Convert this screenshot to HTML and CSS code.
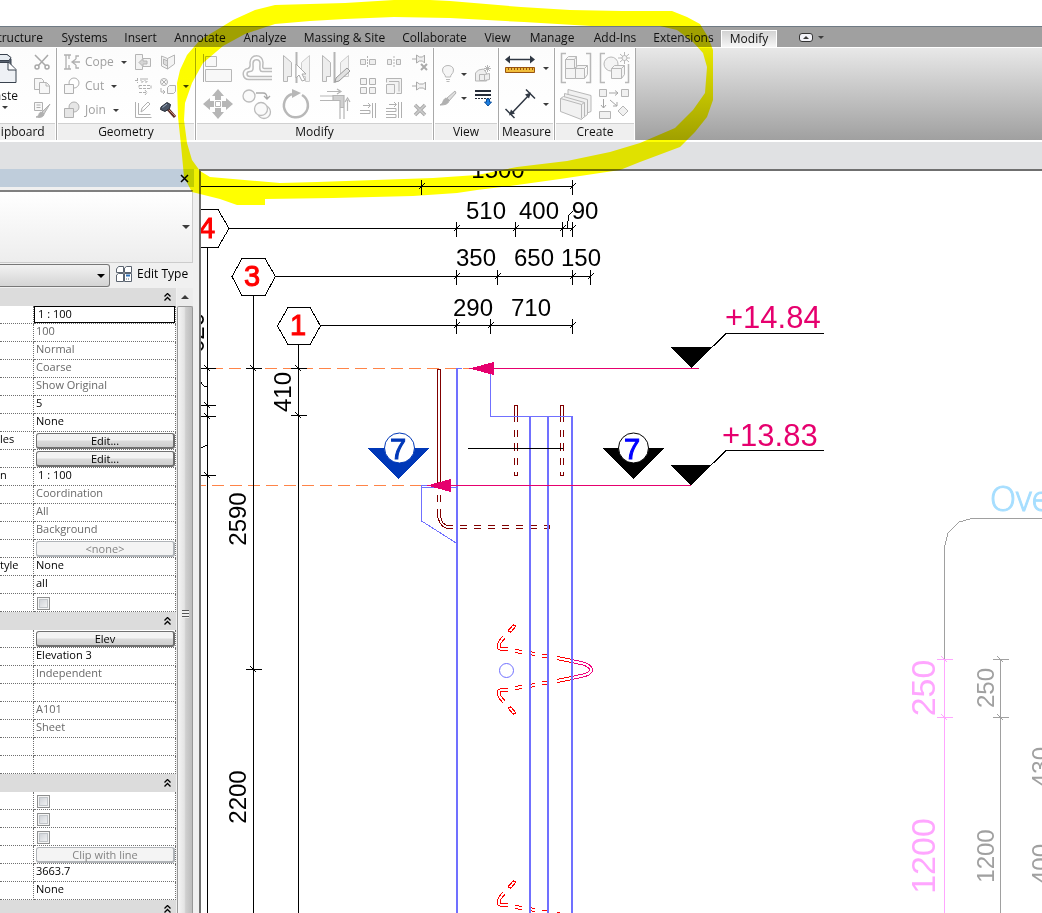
FILE: index.html
```html
<!DOCTYPE html>
<html lang="en">
<head>
<meta charset="utf-8">
<title>Section view</title>
<link rel="stylesheet" href="styles.css">
</head>
<body>
<div class="app">
  <nav class="tabs" aria-label="Ribbon tabs">
    <a class="tab tab-cut" href="#structure">Structure</a>
    <a class="tab" href="#systems">Systems</a>
    <a class="tab" href="#insert">Insert</a>
    <a class="tab" href="#annotate">Annotate</a>
    <a class="tab" href="#analyze">Analyze</a>
    <a class="tab" href="#massing">Massing &amp; Site</a>
    <a class="tab" href="#collaborate">Collaborate</a>
    <a class="tab" href="#view">View</a>
    <a class="tab" href="#manage">Manage</a>
    <a class="tab" href="#addins">Add-Ins</a>
    <a class="tab" href="#extensions">Extensions</a>
    <a class="tab tab-active" href="#modify">Modify</a>
    <button class="minimize" type="button" aria-label="Minimize ribbon"><span class="pill"><span class="caret caret-up"></span></span><span class="caret"></span></button>
  </nav>

  <div class="ribbon">
    <section class="panel panel-clipboard">
      <div class="tools tools-clipboard">
        <button class="tool paste" type="button">
          <svg width="32" height="32" viewBox="0 0 32 32"><path d="M2 3h20l3 4v6h-23z" fill="#56606e" stroke="#39424e"/><path d="M6 2.500h15l4 3-2 3H6z" fill="#e8edf2" stroke="#39424e"/><path d="M4 10.500h19l7 7v13H4z" fill="#eef1f5" stroke="#39424e"/><path d="M22 11v7h8" fill="#fff" stroke="#39424e"/></svg>
          <span>Paste</span><span class="caret"></span>
        </button>
        <div class="stack">
          <button class="tool" type="button" aria-label="Cut to clipboard"><svg width="18" height="18" viewBox="0 0 18 18" fill="none" stroke="#a9a9a9" stroke-width="1.500"><path d="M2 2l11 11M15 2L5 13"/><circle cx="4" cy="14" r="2"/><circle cx="14" cy="14" r="2"/></svg></button>
          <button class="tool" type="button" aria-label="Copy to clipboard"><svg width="18" height="18" viewBox="0 0 18 18" fill="#f7f7f7" stroke="#b5b5b5"><path d="M1.500 1.500h7l2 2v9h-9z"/><path d="M6.500 5.500h7l3 3v8h-10z"/><path d="M13 6v3h3" fill="none"/></svg></button>
          <button class="tool" type="button" aria-label="Match type"><svg width="18" height="18" viewBox="0 0 18 18" fill="#f7f7f7" stroke="#b0b0b0"><path d="M1.500 1.500h8v8h-8zM3.500 4h4M3.500 6.500h4"/><path d="M17 3l-8 8 2 2z" fill="#ccc"/><path d="M8 11c-3 1-1 4-5 5 4 1 8 0 8-3z" fill="#b0b0b0"/></svg></button>
        </div>
      </div>
      <h2 class="panel-title">Clipboard</h2>
    </section>

    <section class="panel panel-geometry">
      <div class="tools tools-geometry">
        <button class="tool labelled" type="button"><svg width="18" height="18" viewBox="0 0 18 18" fill="none" stroke="#b0b0b0" stroke-width="1.300"><path d="M1 2h7M1 16h7M3 2v14M6 2v4M6 12v4M10 9h7M13 6l-4 3 4 3M16 3h-3v3M16 15h-3v-3"/></svg>Cope<span class="caret"></span></button>
        <button class="tool" type="button" aria-label="Wall joins"><svg width="18" height="18" viewBox="0 0 18 18" fill="#f3f3f3" stroke="#b5b5b5"><path d="M1.500 1.500h7v4h8v8h-8v3h-7z"/><path d="M5 9.500l4-4v2.500h4v3H9V13.500z" fill="#d5d5d5"/></svg></button>
        <button class="tool" type="button" aria-label="Split face"><svg width="18" height="18" viewBox="0 0 18 18" fill="#f3f3f3" stroke="#b5b5b5"><path d="M2.500 3l6 2.500 7-3.500v9l-7 5-6-3z"/><path d="M8.500 5.500v10.500M4.500 6l4 2v5l-4-2z" fill="#ddd"/></svg></button>
        <span></span>
        <button class="tool labelled" type="button"><svg width="18" height="18" viewBox="0 0 18 18" fill="#fff" stroke="#b0b0b0"><circle cx="11" cy="6" r="5"/><path d="M1.500 7.500h9v9h-9z" fill="#f7f7f7"/></svg>Cut<span class="caret"></span></button>
        <button class="tool" type="button" aria-label="Beam joins"><svg width="18" height="18" viewBox="0 0 18 18" fill="none" stroke="#b0b0b0"><path d="M1 3.500h4M3.500 1v5M7 1v4h2v-4M11 1v4h2v-4M5 8.500h12v3H5zM5 15.500h8M11 13l2 2.500-2 2.500" stroke-dasharray="3 1"/></svg></button>
        <button class="tool" type="button" aria-label="Paint"><svg width="18" height="18" viewBox="0 0 18 18" fill="#f7f7f7" stroke="#b0b0b0"><circle cx="5" cy="5" r="3.500"/><path d="M3 3l4 4M7 3L3 7M2 11v4h4M4 13l2 2-2 2" fill="none"/><path d="M8.500 10.500l2-2h6v6l-2 2h-6z"/></svg></button>
        <span class="caret"></span>
        <button class="tool labelled" type="button"><svg width="18" height="18" viewBox="0 0 18 18" fill="#e6e6e6" stroke="#b0b0b0"><circle cx="11" cy="6" r="5"/><path d="M1.500 7.500h9v9h-9z"/></svg>Join<span class="caret"></span></button>
        <button class="tool" type="button" aria-label="Unjoin"><svg width="18" height="18" viewBox="0 0 18 18" fill="none" stroke="#b0b0b0"><path d="M1.500 1v15.500h16M4.500 2v11.500h12M7 11l1-4 6-6 2 2-6 6z"/></svg></button>
        <button class="tool" type="button" aria-label="Demolish"><svg width="18" height="18" viewBox="0 0 18 18"><path d="M8 7l8 9" stroke="#5a2c24" stroke-width="3"/><path d="M9 8l7 7" stroke="#c98a78"/><path d="M2 6l6-4.500 3.500 2-1 4L6 10.500 1.500 8.500z" fill="#4a5565" stroke="#252c36"/><path d="M3.500 6.500L8 3" stroke="#9aabc0"/></svg></button>
        <span></span>
      </div>
      <h2 class="panel-title">Geometry</h2>
    </section>

    <section class="panel panel-modify">
      <div class="tools tools-modify">
        <div class="large-grid">
          <button class="tool" type="button" aria-label="Align"><svg width="32" height="32" viewBox="0 0 32 32" fill="#f8f8f8" stroke="#b8b8b8"><path d="M1.500 2v28" stroke="#aaa"/><path d="M3.500 4.500h11v10h-11zM3.500 17.500h26v12h-26z"/></svg></button>
          <button class="tool" type="button" aria-label="Offset"><svg width="32" height="32" viewBox="0 0 32 32" fill="none" stroke="#bdbdbd" stroke-width="1.500"><path d="M31 16.500h-8c-2 0-1-3-1-6 0-9-13-9-13 0 0 3 1 5-2 6-7 1-6 11 1 11h23"/><path d="M31 19.500h-10c-3 0-2-5-2-8 0-5-7-5-7 0 0 4 1 8-3 8-4 0-4 5 0 5h22"/></svg></button>
          <button class="tool" type="button" aria-label="Mirror - pick axis"><svg width="32" height="32" viewBox="0 0 32 32" fill="#ededed" stroke="#b5b5b5"><path d="M3.500 3.500l8 7v14h-4v5h-4z"/><path d="M29.500 3.500l-8 7v14h4v5h4z" fill="#f3f3f3" stroke="#ccc"/><path d="M16.500 0v31" stroke-width="2"/><path d="M16 12l10 10h-4l3 6-3 1-3-6-3 3z" fill="#fff" stroke="#aaa"/></svg></button>
          <button class="tool" type="button" aria-label="Mirror - draw axis"><svg width="32" height="32" viewBox="0 0 32 32" fill="#ededed" stroke="#b5b5b5"><path d="M3.500 3.500l8 7v14h-4v5h-4z"/><path d="M29.500 3.500l-8 7v14h8z" fill="#f3f3f3" stroke="#ccc"/><path d="M15.500 0v31" stroke-width="2"/><path d="M28 16l3 3-11 10-4 1 1-4z" fill="#e2e2e2" stroke="#999"/></svg></button>
          <button class="tool" type="button" aria-label="Move"><svg width="32" height="32" viewBox="0 0 32 32" fill="#b6b6b6"><path d="M16 1l6 7h-3v4h-6V8h-3zM16 31l6-7h-3v-4h-6v4h-3zM1 16l7-6v3h4v6H8v3zM31 16l-7-6v3h-4v6h4v3z"/><path d="M13.500 13.500h5v5h-5z" fill="#fff" stroke="#b6b6b6"/></svg></button>
          <button class="tool" type="button" aria-label="Copy"><svg width="32" height="32" viewBox="0 0 32 32" fill="#fafafa" stroke="#bcbcbc" stroke-width="1.300"><circle cx="8" cy="8" r="6"/><circle cx="23" cy="24" r="6.500"/><circle cx="20" cy="21" r="6.500"/><path d="M15 5h7q4 0 4 5M23 8l3 3 3-3" fill="none" stroke="#a9a9a9"/></svg></button>
          <button class="tool" type="button" aria-label="Rotate"><svg width="32" height="32" viewBox="0 0 32 32" fill="none" stroke="#b8b8b8" stroke-width="2.500"><path d="M12 6a12 12 0 1 0 10 1"/><path d="M12 1l9 4-9 5z" fill="#b8b8b8" stroke="none"/></svg></button>
          <button class="tool" type="button" aria-label="Trim to corner"><svg width="32" height="32" viewBox="0 0 32 32" fill="none" stroke="#b5b5b5" stroke-width="1.200"><path d="M8 3.500h13M18 1l4 2.500-4 2.500M28.500 23v-11M26 14l2.500-4 2.500 4"/><path d="M1 8h13M1 12.500h13M21 20v11M25 20v11"/><path d="M14 7.500h11v12h-4v-7h-7z" fill="#d0d0d0"/></svg></button>
        </div>
        <div class="small-grid">
          <button class="tool" type="button" aria-label="Split element"><svg width="18" height="18" viewBox="0 0 18 18" fill="#eee" stroke="#b5b5b5"><path d="M1.500 6.500h5v5h-5zM10.500 6.500h6v5h-6z"/><path d="M8.500 3v12" stroke-dasharray="2 1"/></svg></button>
          <button class="tool" type="button" aria-label="Split with gap"><svg width="18" height="18" viewBox="0 0 18 18" fill="#eee" stroke="#b5b5b5"><path d="M2.500 6.500h4v5h-4zM11.500 6.500h4v5h-4z"/><path d="M9 3v12" stroke-dasharray="2 1"/></svg></button>
          <button class="tool" type="button" aria-label="Unpin"><svg width="18" height="18" viewBox="0 0 18 18" fill="#eee" stroke="#aaa"><path d="M1 6h4M5.500 2v8l3-2h3l2 2V2l-2 2h-3z"/><path d="M10 11l6 6M16 11l-6 6" stroke-width="2"/></svg></button>
          <button class="tool" type="button" aria-label="Array"><svg width="18" height="18" viewBox="0 0 18 18" fill="#f3f3f3" stroke="#b0b0b0"><path d="M1.500 1.500h6v6h-6zM10.500 1.500h6v6h-6zM1.500 10.500h6v6h-6zM10.500 10.500h6v6h-6z"/></svg></button>
          <button class="tool" type="button" aria-label="Scale"><svg width="18" height="18" viewBox="0 0 18 18" fill="#f3f3f3" stroke="#b5b5b5"><path d="M1.500 5.500v-4h15v15h-5M1.500 7.500h8v9h-8zM4 4.500h10v10"/></svg></button>
          <button class="tool" type="button" aria-label="Pin"><svg width="18" height="18" viewBox="0 0 18 18" fill="#f3f3f3" stroke="#aaa"><path d="M1 9h4M5.500 5v8l3-2h4l2 2V5l-2 2h-4z"/></svg></button>
          <button class="tool" type="button" aria-label="Trim single"><svg width="18" height="18" viewBox="0 0 18 18" fill="none" stroke="#b0b0b0"><path d="M4 4.500h7M9 2l2.500 2.500L9 7M1 9.500h10v3H1M13.500 2v15M16.500 2v15"/></svg></button>
          <button class="tool" type="button" aria-label="Trim multiple"><svg width="18" height="18" viewBox="0 0 18 18" fill="none" stroke="#b0b0b0"><path d="M4 3.500h7M9 1l2.500 2.500L9 6M1 7.500h10v3H1M1 13.500h10v3H1M13.500 1v16M16.500 1v16"/></svg></button>
          <button class="tool" type="button" aria-label="Delete"><svg width="18" height="18" viewBox="0 0 18 18"><path d="M4 4l10 10M14 4L4 14" stroke="#aaa" stroke-width="3.500"/><path d="M4 4l10 10M14 4L4 14" stroke="#ccc" stroke-width="1.500"/></svg></button>
        </div>
      </div>
      <h2 class="panel-title">Modify</h2>
    </section>

    <section class="panel panel-view">
      <div class="tools tools-view">
        <button class="tool" type="button" aria-label="Hide in view"><svg width="18" height="18" viewBox="0 0 18 18" fill="#f5f5f5" stroke="#b8b8b8"><path d="M6.500 12c0-3-3-3-3-7 0-6 11-6 11 0 0 4-3 4-3 7zM7 14.500h4M7.500 16.500h3"/></svg></button>
        <span class="caret"></span>
        <button class="tool" type="button" aria-label="Displace elements"><svg width="18" height="18" viewBox="0 0 18 18" fill="#eee" stroke="#b5b5b5"><path d="M1.500 8q2-4 8-4l3 4v8h-11z"/><path d="M5.500 9.500h5v6h-5zM10.500 9.500l5-1v6l-5 1M13.500 0v7M10 3.500h7M11 1l5 5M16 1l-5 5"/></svg></button>
        <button class="tool" type="button" aria-label="Override graphics"><svg width="18" height="18" viewBox="0 0 18 18" fill="#ddd" stroke="#b0b0b0"><path d="M16 2L8 9l2 3 7-8z"/><path d="M7 9c-4 2-2 5-6 7 5 0 9-1 9-5z" fill="#b0b0b0"/></svg></button>
        <span class="caret"></span>
        <button class="tool" type="button" aria-label="Linework"><svg width="18" height="18" viewBox="0 0 18 18"><path d="M1 2h16M1 6h16" stroke="#252c38" stroke-width="2"/><path d="M1 9.500h16" stroke="#252c38" stroke-dasharray="2 1"/><path d="M12.500 10h3v3h2l-3.500 4-3.500-4h2z" fill="#1d7fe0" stroke="#0b4f9c"/></svg></button>
      </div>
      <h2 class="panel-title">View</h2>
    </section>

    <section class="panel panel-measure">
      <div class="tools tools-measure">
        <button class="tool" type="button" aria-label="Measure"><svg width="32" height="32" viewBox="0 0 32 32"><path d="M4 7.500h24" stroke="#303844" stroke-width="1.500"/><path d="M1 7.500l5-4v8zM31 7.500l-5-4v8z" fill="#303844"/><path d="M1.500 15.500h29v5h-29z" fill="#f0bd3a" stroke="#99530f"/><path d="M4.500 16v2M7.500 16v2M10.500 16v2M13.500 16v2M16.500 16v2M19.500 16v2M22.500 16v2M25.500 16v2M28.500 16v2" stroke="#99530f"/></svg></button>
        <span class="caret"></span>
        <button class="tool" type="button" aria-label="Aligned dimension"><svg width="32" height="32" viewBox="0 0 32 32" stroke="#303844" fill="#303844"><path d="M7 26L25 7M1.500 21l9 9M22 1.500l9 9" stroke-width="1.500"/><path d="M5 27.500l2-6 4 4zM27 4.500l-2 6-4-4z" stroke="none"/></svg></button>
        <span class="caret"></span>
      </div>
      <h2 class="panel-title">Measure</h2>
    </section>

    <section class="panel panel-create">
      <div class="tools tools-create">
        <button class="tool" type="button" aria-label="Create assembly"><svg width="32" height="32" viewBox="0 0 32 32" fill="#f4f4f4" stroke="#b8b8b8"><path d="M6 1.500H1.500v29H6M26 1.500h4.500v29H26" fill="none" stroke-width="1.500"/><path d="M5.500 7.500l3-3h8v10l-2 2M5.500 7.500h9v9h-9zM14.500 7.500l2-3M5.500 16.500h10v10h-10zM15.500 16.500h9v10h-9zM15.500 16.500l2-3h10l-3 3M27.500 13.500v9l-3 4"/></svg></button>
        <button class="tool" type="button" aria-label="Create group"><svg width="32" height="32" viewBox="0 0 32 32" fill="#f4f4f4" stroke="#b8b8b8"><path d="M6 1.500H1.500v29H6M26 30.500h3.500V12" fill="none" stroke-width="1.500"/><circle cx="12" cy="12" r="7"/><path d="M12.500 16.500l3-3h10v9l-3 4h-10zM12.500 16.500h10v10M22.500 16.500l3-3M25.500 0v12M19 6h12M21 2l9 8M30 2l-9 8"/><circle cx="25.500" cy="6" r="2.500"/></svg></button>
        <button class="tool" type="button" aria-label="Create parts"><svg width="32" height="32" viewBox="0 0 32 32" fill="#f1f1f1" stroke="#b8b8b8"><path d="M8 1.500l23 6v16l-5 2L8 15z"/><path d="M4.500 5.500l23 6v15l-4 3-19-8z"/><path d="M.500 10.500l3-2 21 6v14l-3 3-21-8z"/><path d="M.500 10.500l21 6v14M21.500 16.500l3-2" fill="none"/></svg></button>
        <button class="tool" type="button" aria-label="Create similar"><svg width="32" height="32" viewBox="0 0 32 32" fill="#f1f1f1" stroke="#b5b5b5"><path d="M.500 1.500h7v7h-7zM22.500 1.500h7v7h-7zM.500 23.500h11v7h-11zM24 18l5 5-5 5-5-5z"/><path d="M10 5h9M16 2.500l3 2.500-3 2.500M4.500 11v9M2 17l2.500 3L7 17M11 12l7 6M18 14v4h-4" fill="none" stroke="#a5a5a5"/></svg></button>
      </div>
      <h2 class="panel-title">Create</h2>
    </section>
  </div>

  <div class="options-bar"></div>

  <main class="workspace">
    <aside class="palette" aria-label="Properties">
      <div class="palette-head"><button class="close" type="button" aria-label="Close"><svg width="9" height="9" viewBox="0 0 9 9"><path d="M1 1l7 7M8 1L1 8" stroke="#000" stroke-width="1.500"/></svg></button></div>
      <div class="type-preview"><span class="caret caret-wide"></span></div>
      <div class="type-row">
        <div class="type-select"><select aria-label="View type"><option></option></select><span class="caret caret-dark"></span></div>
        <button class="edit-type" type="button"><svg width="18" height="18" viewBox="0 0 18 18" fill="#fff" stroke="#5b6470"><path d="M1.500 4l2-2.500h5v6h-7zM9.500 3l2-1.500h5v6h-7zM1.500 10l2-1.500h5v8h-7z"/><path d="M9.500 8.500h7v8h-7z"/><path d="M11 10.500h4" stroke="#2c6fb7" stroke-width="2"/><path d="M11 14h4" stroke-dasharray="1 1"/></svg>Edit Type</button>
      </div>
      <div class="palette-body">
        <table class="props">
          <colgroup><col class="col-name"><col class="col-value"></colgroup>
          <tbody>
            <tr class="group"><td colspan="2"><button type="button" aria-label="Collapse Graphics"><svg width="7" height="8" viewBox="0 0 7 8"><path d="M.500 3.500l3-3 3 3M.500 7.500l3-3 3 3" fill="none" stroke="#000" stroke-width="1.300"/></svg></button></td></tr>
            <tr><th></th><td><input class="field" type="text" value="1 : 100" aria-label="View scale"></td></tr>
            <tr class="dim"><th></th><td>100</td></tr>
            <tr class="dim"><th></th><td>Normal</td></tr>
            <tr class="dim"><th></th><td>Coarse</td></tr>
            <tr class="dim"><th></th><td>Show Original</td></tr>
            <tr><th></th><td>5</td></tr>
            <tr><th></th><td>None</td></tr>
            <tr><th>les</th><td><button class="cell-button" type="button">Edit...</button></td></tr>
            <tr><th></th><td><button class="cell-button" type="button">Edit...</button></td></tr>
            <tr><th>n</th><td class="scale">1 : 100</td></tr>
            <tr class="dim"><th></th><td>Coordination</td></tr>
            <tr class="dim"><th></th><td>All</td></tr>
            <tr class="dim"><th></th><td>Background</td></tr>
            <tr><th></th><td><button class="cell-button" type="button" disabled>&lt;none&gt;</button></td></tr>
            <tr><th>tyle</th><td>None</td></tr>
            <tr><th></th><td>all</td></tr>
            <tr><th></th><td><input type="checkbox" aria-label="Sun path"></td></tr>
            <tr class="group"><td colspan="2"><button type="button" aria-label="Collapse Identity Data"><svg width="7" height="8" viewBox="0 0 7 8"><path d="M.500 3.500l3-3 3 3M.500 7.500l3-3 3 3" fill="none" stroke="#000" stroke-width="1.300"/></svg></button></td></tr>
            <tr><th></th><td><button class="cell-button" type="button">Elev</button></td></tr>
            <tr><th></th><td>Elevation 3</td></tr>
            <tr class="dim"><th></th><td>Independent</td></tr>
            <tr><th></th><td></td></tr>
            <tr class="dim"><th></th><td>A101</td></tr>
            <tr class="dim"><th></th><td>Sheet</td></tr>
            <tr><th></th><td></td></tr>
            <tr><th></th><td></td></tr>
            <tr class="group"><td colspan="2"><button type="button" aria-label="Collapse Extents"><svg width="7" height="8" viewBox="0 0 7 8"><path d="M.500 3.500l3-3 3 3M.500 7.500l3-3 3 3" fill="none" stroke="#000" stroke-width="1.300"/></svg></button></td></tr>
            <tr><th></th><td><input type="checkbox" aria-label="Crop view"></td></tr>
            <tr><th></th><td><input type="checkbox" aria-label="Crop region visible"></td></tr>
            <tr><th></th><td><input type="checkbox" aria-label="Annotation crop"></td></tr>
            <tr><th></th><td><button class="cell-button" type="button" disabled>Clip with line</button></td></tr>
            <tr><th></th><td>3663.7</td></tr>
            <tr><th></th><td>None</td></tr>
            <tr class="group"><td colspan="2"><button type="button" aria-label="Collapse Phasing"><svg width="7" height="8" viewBox="0 0 7 8"><path d="M.500 3.500l3-3 3 3M.500 7.500l3-3 3 3" fill="none" stroke="#000" stroke-width="1.300"/></svg></button></td></tr>
          </tbody>
        </table>
        <div class="scrollbar"><div class="scroll-up"><span class="caret caret-up"></span></div><div class="scroll-thumb"><span class="grip"></span></div></div>
      </div>
    </aside>

    <div class="drawing">
      <svg width="1841" height="1742" viewBox="201 171 1841 1742" fill="none">
        <defs>
          <g id="tick-v"><path d="M0 -7V8M-3 3L3 -3"/></g>
          <g id="tick-h"><path d="M-8 0H8M-3 -3L3 3"/></g>
          <g id="bar">
            <path class="bar-out" d="M515 625L509 632M504 637L500 642Q496 649 503 649H508M515 651L522 652M529 653L535 654M542 655.500L549 656.500M557 658L572 661M515 714L509 707M504 702L500 697Q496 690 503 690H508M515 688L522 687M529 686L535 685M542 683.500L549 682.500M557 681L572 678"/>
            <path class="bar-in" d="M514 626L510 631M504 637L500 642Q496 649 503 649H508M515 651L522 652M529 653L535 654M542 655.500L549 656.500M557 658L572 661M514 713L510 708M504 702L500 697Q496 690 503 690H508M515 688L522 687M529 686L535 685M542 683.500L549 682.500M557 681L572 678"/>
            <path class="loop-out" d="M572 661L585 664Q591 667 591 669.500Q591 673 585 675L572 678"/>
            <path class="bar-in" d="M572 661L585 664Q591 667 591 669.500Q591 673 585 675L572 678"/>
          </g>
        </defs>

        <g class="levels" stroke="#ff8448">
          <path d="M216 368.500H470" stroke-dasharray="12 6" stroke-dashoffset="5"/>
          <path d="M200 485.500H428" stroke-dasharray="12 6" stroke-dashoffset="6"/>
        </g>

        <use href="#bar"/>
        <use href="#bar" y="256"/>
        <g class="rebar" stroke="#800000">
          <path d="M437.500 485V369.500H440.500V485"/>
          <path d="M437.500 495v7M440.500 495v7M437.500 509v9M440.500 509v7Q442 525 448 525.500H453M438 518Q441 528 448 528.500H453"/>
          <path d="M460 525.500H550M460 528.500H550" stroke-dasharray="7 7"/>
          <path d="M549.500 525v4"/>
          <path d="M514.500 422V405.500H517.500V422M514.500 430v7M517.500 430v7M514.500 443v8M517.500 443v8M514.500 458v7M517.500 458v7M514.500 471.500v4h3v-4"/>
          <path d="M560.500 422V405.500H563.500V422M560.500 430v7M563.500 430v7M560.500 443v8M563.500 443v8M560.500 458v7M563.500 458v7M560.500 471.500v4h3v-4"/>
        </g>

        <g stroke="#7070ff">
          <path d="M457 368V1913M530 416V1913M548 416V1913M572 416V1913" stroke-width="2"/>
          <path d="M457 368.500H462M490.500 369V416.500H573M457 485.500H421.500V521L457 543.500M421 487.500H457"/>
          <circle cx="506.500" cy="670.500" r="7"/>
        </g>

        <g stroke="#e6006e" fill="#e6006e">
          <path d="M490 368.500H699M450 485.500H691"/>
          <path d="M469 368.500L494 362V375ZM427 485.500L451 479V492Z" stroke="none"/>
        </g>

        <g stroke="#000">
          <path d="M201 186.500H572M229 228.500H572M275 276.500H591M320 325.500H572"/>
          <path d="M207.500 247V1913M253.500 295V1913M298.500 344V1913M468 448.500H563"/>
          <path d="M567 228L569 215L573 211M201 382q1 4 6 5M201 448q3 -1 6 -3"/>
          <path d="M190 209.500H218L229 228.500L218 247.500H190M242 258.500H265L275.500 276.500L265 295.500H242L232 276.500ZM288 307.500H310L320.500 326L310 344.500H288L277.500 326Z"/>
          <use href="#tick-v" x="421.500" y="186.500"/><use href="#tick-v" x="572.500" y="186.500"/>
          <use href="#tick-v" x="456.500" y="228.500"/><use href="#tick-v" x="515.500" y="228.500"/><use href="#tick-v" x="562.500" y="228.500"/><use href="#tick-v" x="572.500" y="228.500"/>
          <use href="#tick-v" x="456.500" y="276.500"/><use href="#tick-v" x="497.500" y="276.500"/><use href="#tick-v" x="572.500" y="276.500"/><use href="#tick-v" x="590.500" y="276.500"/>
          <use href="#tick-v" x="456.500" y="325.500"/><use href="#tick-v" x="490.500" y="325.500"/><use href="#tick-v" x="572.500" y="325.500"/>
          <use href="#tick-h" x="207.500" y="368.500"/><use href="#tick-h" x="207.500" y="405.500"/><use href="#tick-h" x="207.500" y="416.500"/><use href="#tick-h" x="207.500" y="475.500"/>
          <use href="#tick-h" x="253.500" y="368.500"/><use href="#tick-h" x="253.500" y="669.500"/>
          <use href="#tick-h" x="298.500" y="368.500"/><use href="#tick-h" x="298.500" y="415.500"/>
          <path d="M691 368L726 333.500H824M691 485L726 450.500H824"/>
        </g>
        <g fill="#000">
          <path d="M670 347H712L691 368ZM670 465H712L691 485.500Z"/>
          <path d="M602 448H664L633 479Z"/>
          <path d="M368 448H429L398.500 479Z" fill="#0038b8"/>
        </g>
        <circle cx="399.500" cy="448" r="15" fill="#fff" stroke="#0038b8"/>
        <circle cx="633.500" cy="448" r="15" fill="#fff" stroke="#000"/>

        <g class="dim-text">
          <text x="498" y="178">1500</text>
          <text x="486" y="219">510</text><text x="539" y="219">400</text><text x="585" y="219">90</text>
          <text x="476" y="266">350</text><text x="534" y="266">650</text><text x="581" y="266">150</text>
          <text x="473" y="316">290</text><text x="531" y="316">710</text>
          <text transform="translate(204 333) rotate(-90)">620</text>
          <text transform="translate(291 392) rotate(-90)">410</text>
          <text transform="translate(246 519) rotate(-90)">2590</text>
          <text transform="translate(246 797) rotate(-90)">2200</text>
        </g>
        <g class="grid-text">
          <text x="207" y="238">4</text><text x="252" y="286">3</text><text x="298" y="335">1</text>
          <text class="mark-blue" x="398" y="459">7</text><text class="mark-bright" x="632" y="459">7</text>
        </g>
        <g class="level-text"><text x="725" y="328">+14.84</text><text x="722" y="446">+13.83</text></g>

        <g stroke="#a0a0a0">
          <path d="M2042 518.500H972L959 522L948 533L944.500 547V659M1000.500 659V1913"/>
          <use href="#tick-h" x="1000.500" y="659.500"/><use href="#tick-h" x="1000.500" y="717.500"/>
        </g>
        <g stroke="#ffa6ff">
          <path d="M944.500 659V1913"/>
          <use href="#tick-h" x="944.500" y="659.500"/><use href="#tick-h" x="944.500" y="717.500"/>
        </g>
        <g class="dim-text dim-gray">
          <text transform="translate(994 688) rotate(-90)">250</text>
          <text transform="translate(994 856) rotate(-90)">1200</text>
          <text transform="translate(1049 767) rotate(-90)">430</text>
          <text transform="translate(1049 864) rotate(-90)">400</text>
        </g>
        <g class="dim-text dim-pink">
          <text transform="translate(935 688) rotate(-90)">250</text>
          <text transform="translate(935 856) rotate(-90)">1200</text>
        </g>
        <text class="title-text" x="990" y="511">Overview</text>
      </svg>
    </div>
  </main>

  <svg class="marker" width="730" height="210" viewBox="0 0 730 210">
    <path fill="#ff0" fill-rule="evenodd" d="M220 28L233 20L255 10L275 5L345 3L394 0H430L450 1L521 7L570 10L622 11H672L687 17L700 24L708 37L713 50V100L707 117L695 132L680 147L640 162L620 170L560 179L517 185L477 190L457 193L413 196L333 198L265 199V205H237L220 199L192 192L184 177L181 145L178 117L177 83L180 70L187 55L200 40ZM223 46L203 63L192 83L185 103L184 120L187 143L192 160L200 171L210 177L280 183L317 182L433 178L477 175L517 167L567 161L610 152L640 143L675 128L693 110L705 93L707 67L703 53L693 42L677 30L660 26H591L524 22L450 18L394 17L345 19L310 21L275 24L245 34Z"/>
  </svg>
</div>
</body>
</html>
```

FILE: styles.css
```css
* { box-sizing: border-box; }

body {
  margin: 0;
  background: #fff;
  font-family: "Open Sans", "Noto Sans", sans-serif;
  font-size: 11px;
  line-height: 16px;
  color: #111;
}

button, input, select { font: inherit; color: inherit; }

.app {
  position: relative;
  display: flex;
  flex-direction: column;
  height: 100vh;
  padding-top: 26px;
  overflow: hidden;
}

/* Tabs */
.tabs {
  display: grid;
  grid-template-columns: 53px 63px 49px 70px 60px 99px 81px 45px 64px 62px 75px 56px auto;
  justify-content: start;
  flex: none;
  height: 21px;
  background: #a0a0a0;
  border-top: 1px solid #6f7a84;
  font-size: 12px;
}

.tab {
  display: flex;
  align-items: center;
  justify-content: center;
  height: 20px;
  padding-top: 2px;
  color: #111;
  text-decoration: none;
  white-space: nowrap;
}

.tab-cut { justify-content: flex-end; padding-right: 10px; }

.tab-active {
  height: 17px;
  margin-top: 3px;
  padding-top: 0;
  background: linear-gradient(#d2d2d2, #f6f6f6);
  border: 1px solid #fff;
  border-bottom: 0;
}

.minimize {
  display: flex;
  align-items: center;
  gap: 5px;
  margin-left: 22px;
  padding: 0;
  border: 0;
  background: none;
}

.pill {
  display: flex;
  align-items: center;
  justify-content: center;
  width: 14px;
  height: 9px;
  border: 1px solid #333;
  border-radius: 3px;
  background: #f3f3f8;
}

.caret {
  place-self: center;
  width: 0;
  height: 0;
  border: 3px solid transparent;
  border-top-color: #3c3c3c;
  border-bottom: 0;
}

.caret-up {
  border-top: 0;
  border-bottom: 3px solid #3c3c3c;
}

.caret-dark { border-width: 4px 4px 0; border-top-color: #000; }
.caret-wide { border-width: 4px 4px 0; }

/* Ribbon */
.ribbon {
  display: flex;
  flex: none;
  height: 95px;
  border-top: 1px solid #fff;
  border-bottom: 2px solid #fff;
  background: linear-gradient(#e8e8e8, #a0a0a0);
}

.panel {
  display: flex;
  flex-direction: column;
  flex: none;
  border-right: 1px solid #a9a9a9;
  padding: 0 1px;
  background: #fff;
}

.panel-clipboard { width: 78px; margin-left: -21px; }
.panel-geometry { width: 139px; }
.panel-modify { width: 238px; }
.panel-view { width: 65px; }
.panel-measure { width: 56px; }
.panel-create { width: 81px; }

.panel-title {
  height: 17px;
  margin: 0;
  background: #efefef;
  border-top: 1px solid #d0d0d0;
  font-size: 12px;
  font-weight: 400;
  line-height: 16px;
  text-align: center;
}

.tools {
  flex: 1;
  padding-top: 2px;
  background: linear-gradient(#fcfcfc, #fff);
}

.tool {
  display: flex;
  align-items: center;
  justify-content: center;
  min-width: 0;
  padding: 0;
  border: 0;
  background: none;
}

.tool svg { flex: none; }

.tools-clipboard { display: flex; }

.paste {
  flex-direction: column;
  align-items: flex-end;
  justify-content: flex-start;
  width: 38px;
  padding-top: 2px;
  font-size: 12px;
}

.paste svg { margin-bottom: 4px; }
.paste .caret { margin-right: 10px; align-self: flex-end; margin-top: 2px; }

.stack {
  display: grid;
  grid-template-rows: repeat(3, 24px);
  margin-left: 15px;
}

.tools-geometry {
  display: grid;
  grid-template-columns: 67px 25px 25px 11px;
  grid-template-rows: repeat(3, 24px);
  padding-left: 5px;
}

.labelled {
  justify-content: flex-start;
  gap: 4px;
  color: #a0a0a0;
  font-size: 12px;
}

.labelled .caret { margin-left: 3px; align-self: center; }

.tools-modify { display: flex; padding-left: 1px; gap: 1px; }

.large-grid {
  display: grid;
  grid-template-columns: repeat(4, 39px);
  grid-template-rows: repeat(2, 36px);
}

.small-grid {
  display: grid;
  grid-template-columns: repeat(3, 26px);
  grid-template-rows: repeat(3, 24px);
}

.tools-view {
  display: grid;
  grid-template-columns: 25px 8px 29px;
  grid-template-rows: repeat(2, 24px);
  padding-top: 14px;
}

.tools-measure {
  display: grid;
  grid-template-columns: 40px 11px;
  grid-template-rows: repeat(2, 36px);
}

.tools-create {
  display: grid;
  grid-template-columns: repeat(2, 39px);
  grid-template-rows: repeat(2, 36px);
}

.options-bar { flex: none; height: 27px; background: #e0e1e3; }

/* Workspace */
.workspace { display: flex; flex: 1; min-height: 0; }

.palette {
  display: flex;
  flex-direction: column;
  flex: none;
  width: 199px;
  padding-right: 5px;
  background: #f0f0f0;
  color: #000;
}

.palette-head {
  display: flex;
  flex: none;
  align-items: center;
  justify-content: flex-end;
  height: 18px;
  margin-bottom: 3px;
  padding-right: 5px;
  background: #bfcddb;
}

.close { display: flex; padding: 0; border: 0; background: none; }

.type-preview {
  display: flex;
  flex: none;
  align-items: center;
  justify-content: flex-end;
  height: 73px;
  margin-right: 1px;
  padding-right: 2px;
  border: 1px solid #ccc;
  border-top: 2px solid #808080;
  border-left: 0;
  background: linear-gradient(#fff, #ededed);
}

.type-row { display: flex; flex: none; height: 25px; }

.type-select { position: relative; width: 110px; height: 23px; margin-top: 1px; }

.type-select select {
  width: 100%;
  height: 100%;
  appearance: none;
  border: 1px solid #777;
  border-left: 0;
  border-radius: 0 3px 3px 0;
  background: linear-gradient(#f2f2f2, #d4d4d4);
}

.type-select .caret { position: absolute; right: 5px; top: 10px; }

.edit-type {
  display: flex;
  align-items: center;
  gap: 4px;
  padding: 0 0 3px 5px;
  border: 0;
  background: none;
  font-size: 12px;
  white-space: nowrap;
}

.palette-body { display: flex; flex: 1; min-height: 0; overflow: hidden; }

.props {
  flex: none;
  align-self: flex-start;
  width: 176px;
  table-layout: fixed;
  border-collapse: separate;
  border-spacing: 0;
  background: #fff;
}

.col-name { width: 34px; }
.col-value { width: 142px; }

.props tr { height: 18px; }

.props th, .props td {
  height: 18px;
  padding: 0;
  border-right: 1px dotted #707070;
  border-bottom: 1px dotted #707070;
  font-weight: 400;
  line-height: 14px;
  text-align: left;
  vertical-align: top;
  white-space: nowrap;
}

.props td { padding-left: 2px; }
.props .scale { padding-left: 4px; }
.props .dim td { color: #686868; }

.props .group td {
  padding-right: 5px;
  border: 0;
  background: #dcdcdc;
  vertical-align: middle;
}

.group button { display: flex; margin-left: auto; padding: 0; border: 0; background: none; }

.field {
  display: block;
  width: calc(100% + 2px);
  height: 17px;
  margin-left: -2px;
  padding: 0 3px 2px;
  border: 1px solid #000;
  background: #fff;
}

.cell-button {
  display: block;
  width: 100%;
  height: 16px;
  margin-top: 1px;
  padding: 0;
  border: 1px solid #707070;
  border-right-width: 2px;
  border-bottom-width: 2px;
  border-radius: 3px;
  background: linear-gradient(#f3f3f3 45%, #dadada 55%, #cfcfcf);
  line-height: 13px;
}

.cell-button:disabled {
  border-color: #b0b4b8;
  background: #f4f4f4;
  color: #838383;
}

.props input[type="checkbox"] {
  display: block;
  width: 13px;
  height: 13px;
  margin: 3px 0 0 1px;
  appearance: none;
  border: 1px solid #8e8f8f;
  background: linear-gradient(135deg, #c8ccd2, #f8f8f8);
  box-shadow: inset 0 0 0 1px #f4f4f4, inset 0 0 0 2px #c0c4c8;
}

.scrollbar {
  display: flex;
  flex-direction: column;
  width: 16px;
  margin-left: 1px;
  background: #ececec;
}

.scroll-up { display: flex; flex: none; align-items: center; justify-content: center; height: 18px; }
.scroll-up .caret { border-width: 0 4px 4px; }

.scroll-thumb {
  display: flex;
  flex: 1;
  justify-content: center;
  padding-top: 303px;
  border: 1px solid #979797;
  border-bottom: 0;
  border-radius: 2px 2px 0 0;
  background: linear-gradient(90deg, #f5f5f5, #e4e4e4 45%, #cfcfcf 55%, #bcbcbc);
}

.grip {
  width: 7px;
  height: 8px;
  background: repeating-linear-gradient(#555 0 1px, #eee 1px 3px);
}

/* Drawing area */
.drawing {
  flex: 1;
  min-width: 0;
  overflow: hidden;
  border-top: 2px solid #6f6f6f;
  border-left: 2px solid #6f6f6f;
  background: #fff;
}

.drawing svg { display: block; }
.drawing path, .drawing use { shape-rendering: crispEdges; }
.bar-out { stroke: #f00; stroke-width: 4; }
.bar-in { stroke: #fff; stroke-width: 2; }
.loop-out { stroke: #f0007c; stroke-width: 4; }

.drawing text { font-family: "Liberation Sans", Arial, sans-serif; }
.dim-text { fill: #000; font-size: 24px; text-anchor: middle; }
.dim-gray { fill: #a0a0a0; }
.dim-pink { fill: #ffa6ff; font-size: 34px; }
.grid-text { fill: #f00; stroke: #f00; font-size: 29px; text-anchor: middle; }
.mark-blue { fill: #0038b8; stroke: #0038b8; }
.mark-bright { fill: #00f; stroke: #00f; }
.level-text { fill: #e6006e; font-size: 31px; }
.drawing .title-text { fill: #a6deff; stroke: #a6deff; font-family: "Open Sans", sans-serif; font-size: 34px; font-weight: 300; }

/* Highlighter stroke laid over the ribbon */
.marker {
  position: absolute;
  top: 0;
  left: 0;
  mix-blend-mode: multiply;
  pointer-events: none;
}
```
